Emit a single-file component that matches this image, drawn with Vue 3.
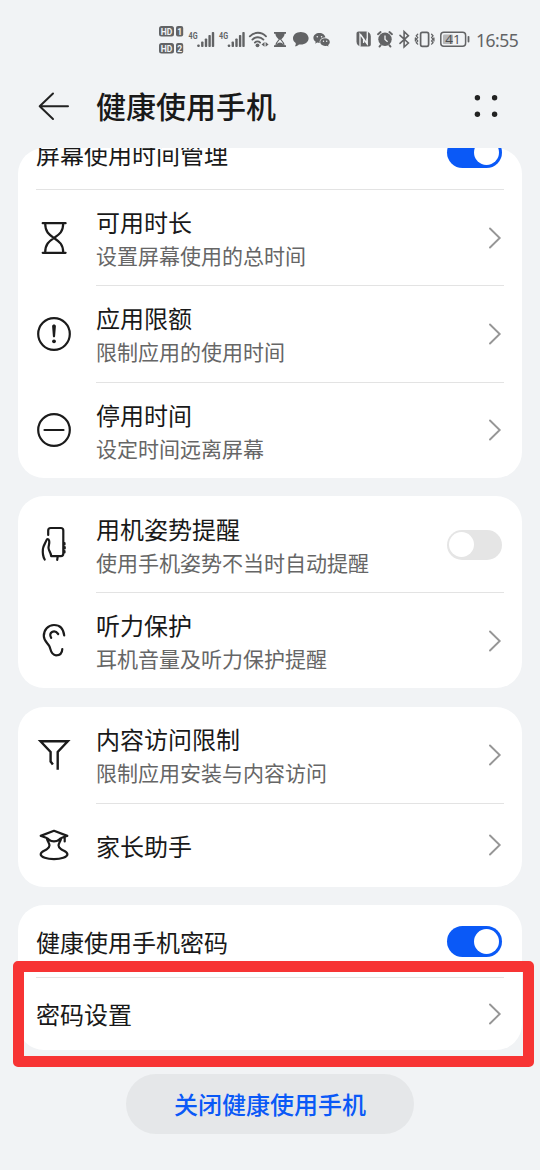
<script setup>
import { ref } from 'vue'

const groups = ref([
  {
    id: 'usage',
    rows: [
      { title: '屏幕使用时间管理', toggle: true, on: true, kind: 'scrolled' },
      { title: '可用时长', sub: '设置屏幕使用的总时间', icon: 'hourglass', full: true },
      { title: '应用限额', sub: '限制应用的使用时间', icon: 'limit' },
      { title: '停用时间', sub: '设定时间远离屏幕', icon: 'pause' },
    ],
  },
  {
    id: 'care',
    rows: [
      { title: '用机姿势提醒', sub: '使用手机姿势不当时自动提醒', icon: 'posture', toggle: true, on: false },
      { title: '听力保护', sub: '耳机音量及听力保护提醒', icon: 'ear' },
    ],
  },
  {
    id: 'content',
    rows: [
      { title: '内容访问限制', sub: '限制应用安装与内容访问', icon: 'funnel' },
      { title: '家长助手', icon: 'parent', kind: 'single' },
    ],
  },
  {
    id: 'password',
    rows: [
      { title: '健康使用手机密码', toggle: true, on: true, kind: 'plain' },
      { title: '密码设置', kind: 'plain last', full: true },
    ],
  },
])

const bars = [
  [198.5, 44.5],
  [202.3, 41.5],
  [206, 38.5],
  [209.6, 35],
  [213, 32],
]
</script>

<template>
  <div class="screen">
    <header class="status">
      <svg class="status-icons" viewBox="156 20 316 40" width="316" height="40">
        <g fill="#626365">
          <g v-for="(n, i) in ['1', '2']" :key="n">
            <rect x="159" :y="26 + i * 17" width="15" height="10.5" rx="2.5" />
            <rect x="176" :y="26 + i * 17" width="7.2" height="10.5" rx="2" />
            <text class="hd" x="166.5" :y="34.6 + i * 17" text-anchor="middle">HD</text>
            <text class="hd" x="179.6" :y="34.6 + i * 17" text-anchor="middle">{{ n }}</text>
          </g>
          <g v-for="shift in [0, 30.5]" :key="shift" :transform="`translate(${shift} 0)`">
            <text class="net" x="188.6" y="38.5" textLength="9" lengthAdjust="spacingAndGlyphs">4G</text>
            <rect v-for="b in bars" :key="b[0]" :x="b[0] - 1.2" :y="b[1]" width="2.4" :height="47 - b[1]" rx="0.8" />
          </g>
          <circle cx="257.5" cy="45.3" r="1.9" />
          <path d="M261.500 44.400l3-2.400v4.800zM268.600 44.400l-3-2.400v4.800z" />
          <path d="M274 32h12v1.800h-1.400c0 2.600-2 4-3.400 5.700h-2.400c-1.400-1.700-3.400-3.100-3.400-5.700h-1.400z" />
          <path d="M274 45.300h2.200c1-2 2.500-2.700 3.800-2.700s2.800.7 3.800 2.700h2.200v1.800h-12z" />
          <path d="M300.800 32c4.500 0 7.800 2.900 7.800 6.300s-3.300 6.300-7.800 6.300c-.7 0-1.300 0-1.900-.2c-1 1.100-2.200 1.700-4 1.900c.8-1 1-1.900.8-3.200c-1.700-1.100-2.700-2.900-2.700-4.800c0-3.400 3.300-6.300 7.800-6.300z" />
          <path d="M319.400 33c3.200 0 5.700 1.900 6 4.500c-3.300 0-5.800 2-5.800 4.600l.1.800c-1 0-1.700 0-2.500-.3l-2 1.100l.5-1.900c-1.500-1-2.300-2.400-2.300-4c0-2.700 2.600-4.800 6-4.800z" />
          <path d="M325 38.200c2.700 0 4.800 1.700 4.800 3.900c0 1.200-.7 2.300-1.700 3l.4 1.400l-1.600-.8c-.6.200-1.200.3-1.900.3c-2.700 0-4.800-1.700-4.800-3.900s2.100-3.900 4.800-3.900z" />
          <path d="M358.500 31.500h7.500c3 .2 4.800 2 4.800 5v8c0 1.200-.8 2-2 2h-7.500c-3-.2-4.800-2-4.800-5v-8c0-1.200.8-2 2-2z" />
          <circle cx="385" cy="39.300" r="6.700" />
        </g>
        <g fill="#f1f3f5">
          <circle cx="317.300" cy="36.800" r=".8" />
          <circle cx="321.600" cy="36.800" r=".8" />
          <circle cx="323.500" cy="41.200" r=".7" />
          <circle cx="326.700" cy="41.200" r=".7" />
        </g>
        <g fill="none" stroke="#f1f3f5" stroke-width="1.300">
          <path d="M360 46.200v-12l6.800 9.300v-5M367.300 31.800v12l-6.800-9.300M363.600 38v5" />
          <path d="M385 35.500v4l2.600 2.300" />
        </g>
        <g fill="none" stroke="#626365" stroke-width="1.900" stroke-linecap="round">
          <path d="M249.800 36.300c4.500-4.700 11.700-4.700 16.200 0M252.400 39.600c3-3.100 8-3.100 11 0M254.900 42.600c1.400-1.400 3.800-1.400 5.200 0" />
          <path stroke-width="1.100" d="M275.900 45.500c0-2.700 2-4.400 3.400-6M284.100 45.500c0-2.700-2-4.400-3.400-6" />
          <path d="M378 34.200l2.600-2.200M392 34.200l-2.600-2.200M380.700 45.200l-1.200 1.400M389.300 45.200l1.200 1.400" />
          <path stroke-width="1.600" d="M400 35.300l8.400 7.700l-4.300 4v-15.300l4.300 4l-8.400 7.700" />
          <rect x="420.600" y="32.300" width="8" height="14" rx="1.700" stroke-width="1.700" />
          <path stroke-width="1.300" d="M417.700 34.300l-1.400 1.500l1.400 1.700l-1.400 1.700l1.400 1.700l-1.400 1.700l1.400 1.500M431.600 34.300l1.400 1.500l-1.400 1.700l1.400 1.700l-1.400 1.700l1.400 1.700l-1.400 1.500M415.400 38v3M433.900 38v3" />
          <rect x="440.800" y="32.300" width="24.800" height="14" rx="3" stroke-width="1.500" />
          <path d="M468.500 36.800v4.800" stroke-width="1.800" />
        </g>
        <rect x="443" y="34.500" width="10" height="9.600" rx="1.200" fill="#b5b6b8" />
        <text class="battery" x="453" y="44.200" text-anchor="middle">41</text>
      </svg>
      <span class="clock">16:55</span>
    </header>

    <nav class="titlebar">
      <svg class="back" viewBox="36 88 36 36" width="36" height="36">
        <path d="M68 106.300H39.700M53 93.500L39.700 106.300L53 119" />
      </svg>
      <h1>健康使用手机</h1>
      <svg class="more" viewBox="472 92 28 28" width="28" height="28">
        <circle cx="477.400" cy="97.800" r="2.700" />
        <circle cx="494.600" cy="97.800" r="2.700" />
        <circle cx="477.400" cy="114.300" r="2.700" />
        <circle cx="494.600" cy="114.300" r="2.700" />
      </svg>
    </nav>

    <main>
      <section v-for="g in groups" :key="g.id" class="card" :class="g.id">
        <div v-for="r in g.rows" :key="r.title" class="row" :class="[r.kind, { full: r.full }]">
          <div v-if="r.icon" class="lead">
            <svg v-if="r.icon === 'hourglass'" viewBox="34 217.500 40 40">
              <path d="M42.700 222.700H65.600M42.700 252.300H65.600M45.200 223C45.200 231.500 49 234 54 237.500C59 241 63.200 243.500 63.200 252M63.200 223C63.200 231.500 59 234 54 237.500C49 241 45.200 243.500 45.200 252" />
            </svg>
            <svg v-else-if="r.icon === 'limit'" viewBox="34 314 40 40">
              <circle cx="54" cy="334" r="15.800" />
              <path class="solid" d="M52.100 326.300c0-2.300 3.800-2.300 3.800 0l-.8 10c-.1 1.500-2.100 1.500-2.200 0z" />
              <circle class="solid" cx="54" cy="341.300" r="1.900" />
            </svg>
            <svg v-else-if="r.icon === 'pause'" viewBox="34 410.500 40 40">
              <circle cx="54" cy="430.500" r="15.800" />
              <path d="M44.500 430.500H63.500" />
            </svg>
            <svg v-else-if="r.icon === 'posture'" viewBox="34 525 40 40">
              <path d="M48.200 536V531.500Q48.200 529 50.700 529H60.800Q63.300 529 63.300 531.500V554.500Q63.300 557.200 60.800 557.200H51.200C51 553.500 48.700 552 48.500 549C48.400 547 49.700 544.500 49.200 542C48.700 539.500 46.900 539.800 46.300 541.500C45.500 544 43.300 546.500 42.900 550C42.500 554 43.200 558 44.700 560.500M57.700 557.500L57.200 560.800" />
              <path d="M64.500 544v1.500M64.700 548v1.500M64.500 552v1.500" />
            </svg>
            <svg v-else-if="r.icon === 'ear'" viewBox="34 621 40 40">
              <path d="M64.200 636.500C63.500 630 59.800 626 54 626C48 626 43.800 631 43.800 637C43.800 641.500 47 643.500 49.200 646.800C50.800 649.300 50.300 656.300 56 656.300C60 656.300 62.200 654 62.300 650M51.200 638.800C47.700 633.500 54.500 629.800 58.200 635" />
            </svg>
            <svg v-else-if="r.icon === 'funnel'" viewBox="34 735.500 40 40">
              <path class="sharp" d="M52.900 765L50.600 762V752.500L40.500 741.800H67.800L57.700 752.500V770.300" />
            </svg>
            <svg v-else viewBox="34 825.500 40 40">
              <path d="M54 831.300L67.300 836.400C63.500 837.500 60.500 838.300 58.800 840.400C56.500 842.300 51.500 842.300 49.200 840.400C47.500 838.300 44.500 837.500 40.700 836.400ZM47 839.500C48 843.500 52 846 47 849.700C44.800 851.300 40.700 851.800 40.700 854.800C40.700 857.800 47 859.600 54 859.600S67.400 857.800 67.400 854.800C67.400 851.800 63.200 851.300 61 849.700C56 846 60 843.500 61 839.500M64.700 837.500V842" />
            </svg>
          </div>
          <div class="body">
            <div class="text">
              <div class="title">{{ r.title }}</div>
              <div v-if="r.sub" class="sub">{{ r.sub }}</div>
            </div>
            <span v-if="r.toggle" class="toggle" :class="{ on: r.on }"><i></i></span>
            <svg v-else class="chevron" viewBox="0 0 14 24" width="14" height="24">
              <path d="M2 2.500L11.700 12L2 21.500" />
            </svg>
          </div>
        </div>
        <div v-if="g.id === 'password'" class="highlight"></div>
      </section>
    </main>

    <button class="close">关闭健康使用手机</button>
  </div>
</template>

<style>
html,
body {
  background: #f1f3f5;
}
</style>

<style scoped>
.screen {
  box-sizing: border-box;
  width: 540px;
  height: 1170px;
  overflow: hidden;
  background: #f1f3f5;
  color: #191919;
  font-family: "Noto Sans CJK SC", sans-serif;
}
.status {
  display: flex;
  align-items: center;
  height: 80px;
  padding-left: 156px;
}
.status-icons {
  flex: none;
}
.hd {
  font: bold 8.500px "Roboto", sans-serif;
  fill: #f1f3f5;
}
.net {
  font: bold 9px "Roboto", sans-serif;
}
.battery {
  font: 13.500px "Open Sans", sans-serif;
  fill: #4c4d4f;
}
.clock {
  margin: -1px 0 0 4px;
  font: 17.500px "Noto Sans", sans-serif;
  letter-spacing: -0.500px;
  color: #626365;
}
.titlebar {
  display: flex;
  align-items: center;
  height: 52px;
  padding: 0 40px 0 36px;
  margin-bottom: 16px;
}
.back {
  fill: none;
  stroke: #222;
  stroke-width: 2;
  stroke-linecap: round;
  stroke-linejoin: round;
}
h1 {
  flex: 1;
  margin: -2px 0 0 24px;
  font-size: 30px;
  line-height: 44px;
  font-weight: 500;
}
.more {
  fill: #222;
}
.card {
  position: relative;
  width: 504px;
  margin: 0 auto 18.200px;
  border-radius: 26px;
  background: #fff;
}
.row {
  box-sizing: border-box;
  display: flex;
  height: 96.400px;
  padding: 0 18px;
}
.care .row,
.content .row {
  height: 96px;
}
.lead {
  width: 60px;
  flex: none;
  display: flex;
  align-items: center;
}
.lead svg {
  width: 40px;
  height: 40px;
  margin-left: -2px;
  fill: none;
  stroke: #1b1b1b;
  stroke-width: 2.200;
  stroke-linecap: round;
  stroke-linejoin: round;
}
.lead svg .solid {
  fill: #1b1b1b;
  stroke: none;
}
.lead svg .sharp {
  stroke-width: 2.400;
  stroke-linecap: butt;
  stroke-linejoin: miter;
}
.body {
  box-sizing: border-box;
  flex: 1;
  display: flex;
  align-items: center;
  justify-content: space-between;
  border-top: 1px solid #e3e3e3;
}
.row:first-child .body {
  border-top-color: transparent;
}
.row.full {
  padding: 0;
  margin: 0 18px;
  border-top: 1px solid #e3e3e3;
}
.row.full .body {
  border-top: none;
}
.text {
  padding-top: 0.600px;
}
.title {
  font-size: 24px;
  line-height: 34px;
}
.sub {
  font-size: 21px;
  line-height: 32px;
  color: #666;
}
.card .row.scrolled {
  height: 41px;
  overflow: hidden;
  align-items: flex-end;
}
.scrolled .body {
  height: 72px;
}
.scrolled .toggle {
  margin-top: -2px;
}
.content .row.single {
  height: 84.500px;
}
.password .row.plain {
  height: 71.500px;
}
.password .row.last {
  height: 72.900px;
}
.toggle {
  box-sizing: border-box;
  width: 55px;
  height: 30.500px;
  margin-right: 2.500px;
  padding: 2.700px;
  border-radius: 16px;
  display: flex;
  background: #e5e5e5;
}
.toggle i {
  width: 25px;
  height: 25px;
  border-radius: 50%;
  background: #fff;
}
.toggle.on {
  justify-content: flex-end;
  background: #0a59f7;
}
.chevron {
  margin-right: 2.500px;
  fill: none;
  stroke: #969696;
  stroke-width: 1.900;
  stroke-linecap: round;
}
.highlight {
  position: absolute;
  box-sizing: border-box;
  left: -5.500px;
  top: 55.800px;
  width: 521.500px;
  height: 106px;
  border: 11px solid #f73434;
  border-radius: 5px;
}
.close {
  display: block;
  width: 288px;
  height: 60px;
  margin: 24px auto 0;
  padding: 0;
  border: 0;
  border-radius: 30px;
  background: #e5e7e9;
  color: #0a59f7;
  font: 500 24px/60px "Noto Sans CJK SC", sans-serif;
}
</style>
